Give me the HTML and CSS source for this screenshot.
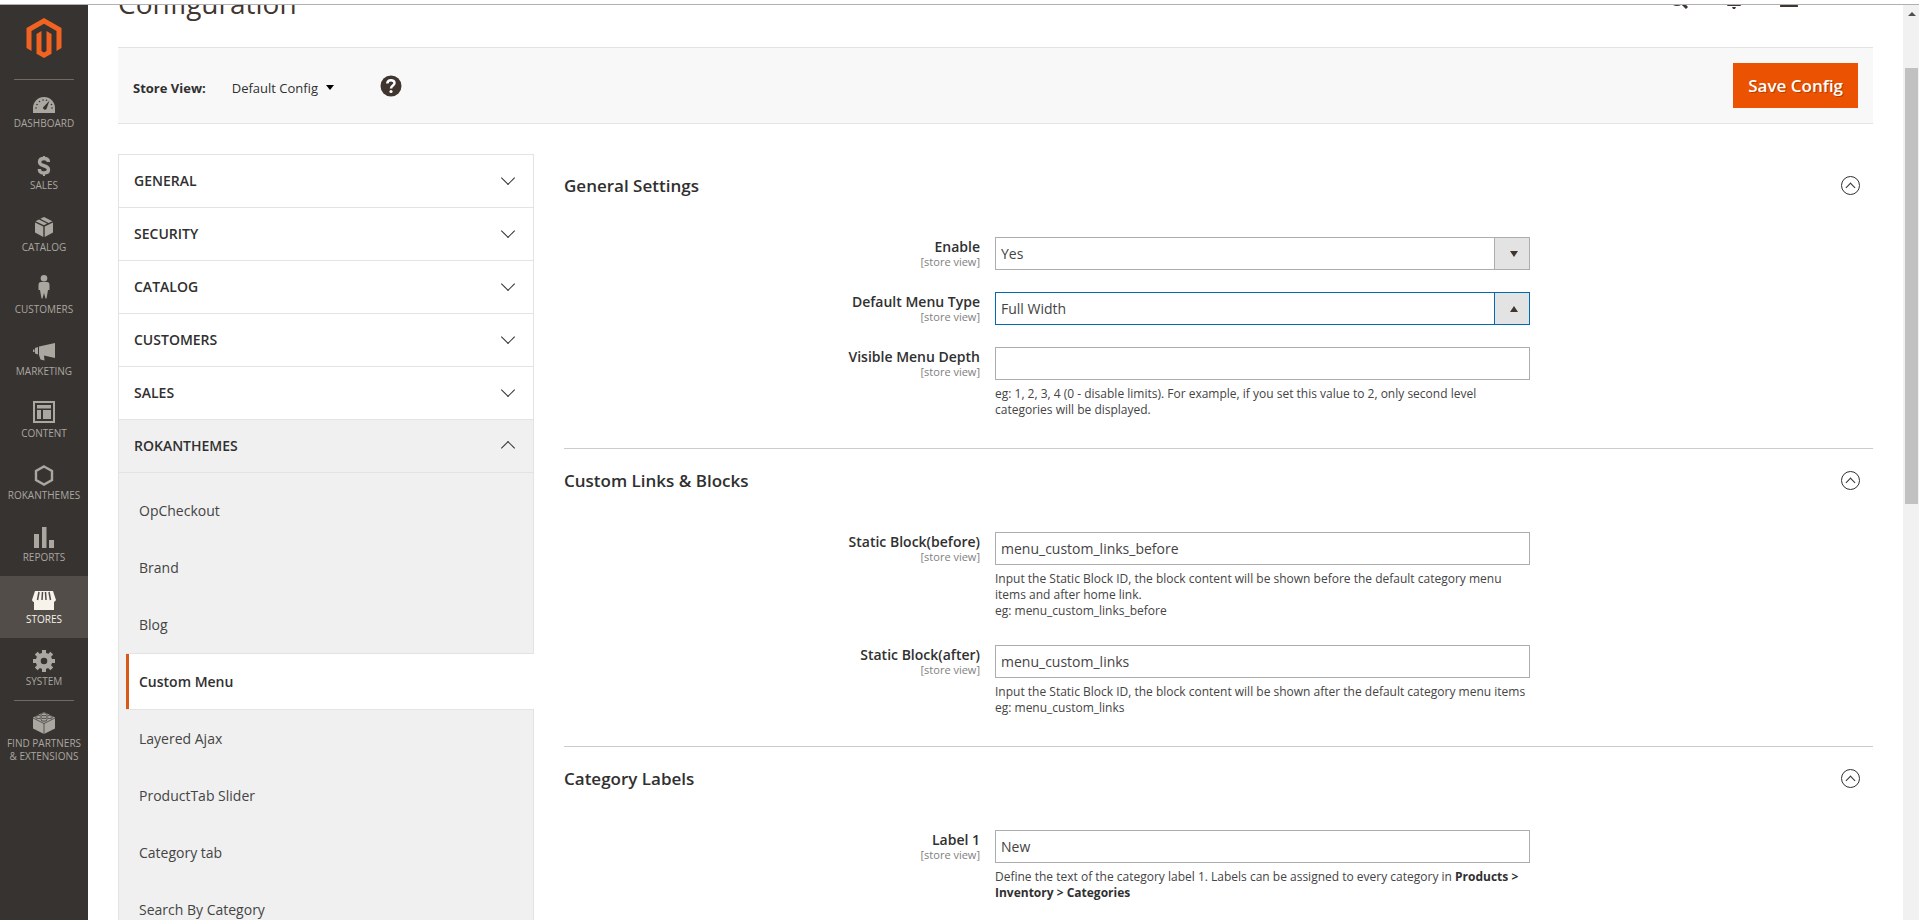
FILE: index.html
```
<!DOCTYPE html>
<html lang="en">
<head>
    <meta charset="UTF-8">
    <meta name="viewport" content="width=device-width, initial-scale=1.0">
    <title>Configuration</title>
    <link rel="stylesheet" href="styles.css">
</head>
<body>
    <div class="top-strip"></div>
    <div class="page">
        <nav class="menu">
            <a href="#" class="logo" aria-label="Home">
                <svg width="36" height="40" viewBox="0 0 36 40" fill="#f26322">
                    <path d="M18 0 L35.500 10 V30 L30.500 33 V13 L18 5.800 L5.500 13 V33 L.500 30 V10 Z"/>
                    <path d="M15.500 13 V33 L18 34.500 L20.500 33 V13 L25.500 15.900 V35.700 L18 40 L10.500 35.700 V15.900 Z"/>
                </svg>
            </a>
            <a href="#" class="menu-item">
                <svg viewBox="0 0 26 26"><path fill="currentColor" d="M2 24 V19 A11 11 0 0 1 24 19 V24 Z"/><g fill="#373330"><circle cx="5" cy="19" r=".8"/><circle cx="6" cy="15.500" r=".8"/><circle cx="8.500" cy="12.500" r=".8"/><circle cx="12" cy="11" r=".8"/><circle cx="15.500" cy="11.300" r=".8"/><circle cx="20.500" cy="15.500" r=".8"/><circle cx="21" cy="19" r=".8"/><path d="M18.500 11.500 L15.500 20 A2 2 0 0 1 12 18.500 Z"/></g></svg>
                <span>DASHBOARD</span>
            </a>
            <a href="#" class="menu-item">
                <svg viewBox="0 0 26 26"><path fill="none" stroke="currentColor" stroke-width="3.400" d="M17.500 11 C17.500 8.300 15.500 7.500 13 7.500 C10.300 7.500 8.500 8.500 8.500 11 C8.500 16 17.500 13.500 17.500 18.500 C17.500 21 15.500 22 13 22 C10.300 22 8.300 21 8.300 18"/><path fill="none" stroke="currentColor" stroke-width="2" d="M13 5 V8 M13 21 V25"/></svg>
                <span>SALES</span>
            </a>
            <a href="#" class="menu-item">
                <svg viewBox="0 0 26 26" fill="currentColor"><path d="M4 9.500 L12.300 13.500 V24 L4 19.500 Z M22 9.500 L13.700 13.500 V24 L22 19.500 Z M4.500 8.300 L8 6.500 L16 10.500 L13 12.200 Z M9.300 5.800 L13 4 L21.500 8.300 L17.500 9.900 Z"/></svg>
                <span>CATALOG</span>
            </a>
            <a href="#" class="menu-item">
                <svg viewBox="0 0 26 26" fill="currentColor"><circle cx="13" cy="3.300" r="3.300"/><path d="M10 7 H16 Q18.500 7 18.500 10 V15 H17 L16.500 18 L15.500 23.500 H14.500 L13 18 L11.500 23.500 H10.500 L9.500 18 L9 15 H7.500 V10 Q7.500 7 10 7 Z"/></svg>
                <span>CUSTOMERS</span>
            </a>
            <a href="#" class="menu-item">
                <svg viewBox="0 0 26 26" fill="currentColor"><path d="M8 9.500 L24 6 V21 L13 18.500 L13.500 23.500 L9.500 22.500 L8 18 Z M4 11 L7 10 V17.500 L4 16.500 Z M2 12.500 H3.500 V15 H2 Z"/></svg>
                <span>MARKETING</span>
            </a>
            <a href="#" class="menu-item">
                <svg viewBox="0 0 26 26" fill="currentColor"><path fill-rule="evenodd" d="M2 2 H24 V24 H2 Z M4 4 V22 H22 V4 Z"/><path d="M6 6 H20 V9.500 H6 Z M6 11 H10 V20 H6 Z M12 11 H20 V20 H12 Z"/></svg>
                <span>CONTENT</span>
            </a>
            <a href="#" class="menu-item">
                <svg viewBox="0 0 26 26"><path fill="none" stroke="currentColor" stroke-width="2.400" d="M13 5.500 L21 10 V19 L13 23.500 L5 19 V10 Z"/></svg>
                <span>ROKANTHEMES</span>
            </a>
            <a href="#" class="menu-item">
                <svg viewBox="0 0 26 26" fill="currentColor"><path d="M3 11 H8 V25 H3 Z M11 4 H15.500 V25 H11 Z M18 17 H23 V25 H18 Z"/></svg>
                <span>REPORTS</span>
            </a>
            <a href="#" class="menu-item active">
                <svg viewBox="0 0 26 26" fill="currentColor"><path d="M4 6 H22 L25 15 Q24 17 22.500 17 H23 V25 H3 V17 Q1.500 17 1 15 Z"/><path stroke="#524d49" stroke-width="1.500" d="M8 7 L6.500 15 M11.500 7 L11 15 M14.500 7 L15 15 M18 7 L19.500 15"/></svg>
                <span>STORES</span>
            </a>
            <a href="#" class="menu-item">
                <svg viewBox="0 0 26 26"><circle cx="13" cy="14" r="5.800" fill="none" stroke="currentColor" stroke-width="5"/><path stroke="currentColor" stroke-width="4" d="M13 3 V7 M13 21 V25 M2 14 H6 M20 14 H24 M5.200 6.200 L8 9 M18 19 L20.800 21.800 M5.200 21.800 L8 19 M18 9 L20.800 6.200"/></svg>
                <span>SYSTEM</span>
            </a>
            <a href="#" class="menu-item partners">
                <svg viewBox="0 0 26 26"><path fill="currentColor" d="M2 8.500 L13 3 L24 8.500 V19.500 L13 25 L2 19.500 Z"/><path fill="none" stroke="#373330" stroke-width=".7" d="M2 9 L13 14.500 L24 9 M13 14.500 V25"/><g fill="currentColor" stroke="#373330" stroke-width=".8"><ellipse cx="13" cy="5.300" rx="3" ry="1.500"/><ellipse cx="7.500" cy="8" rx="3" ry="1.500"/><ellipse cx="18.500" cy="8" rx="3" ry="1.500"/><ellipse cx="13" cy="10.700" rx="3" ry="1.500"/></g></svg>
                <span>FIND PARTNERS<br>&amp; EXTENSIONS</span>
            </a>
        </nav>

        <main class="main">
            <header class="page-header">
                <h1>Configuration</h1>
                <div class="header-tools">
                    <svg width="20" height="20" viewBox="0 0 20 20" fill="none" stroke="#41362f"><circle cx="8" cy="9" r="7" stroke-width="2"/><path stroke-width="3" d="M12.500 13.500 L18 19"/></svg>
                    <svg width="20" height="20" viewBox="0 0 20 20" fill="#41362f"><path d="M4 15 C5 8 5 2 10 2 C15 2 15 8 16 15 L17 17 H3 Z M8 18 H12 L11 20 H9 Z"/></svg>
                    <svg width="20" height="20" viewBox="0 0 20 20" fill="#41362f"><circle cx="10" cy="5" r="5"/><path d="M1 18 Q1 11 10 11 Q19 11 19 18 Z"/></svg>
                </div>
            </header>

            <div class="toolbar">
                <strong>Store View:</strong>
                <button type="button" class="store-switch">Default Config</button>
                <a href="#" class="help" aria-label="Help">
                    <svg width="22" height="22" viewBox="0 0 22 22"><circle cx="11" cy="11" r="10.500" fill="#41362f"/><path fill="none" stroke="#fff" stroke-width="2.500" d="M7.300 8.500 C7.500 4 14.500 4.300 14.500 8 C14.500 10.500 11 10.500 11 13.500"/><circle cx="11" cy="16.500" r="1.600" fill="#fff"/></svg>
                </a>
                <button type="button" class="save">Save Config</button>
            </div>

            <div class="columns">
                <nav class="config-nav">
                    <a href="#" class="tab">GENERAL</a>
                    <a href="#" class="tab">SECURITY</a>
                    <a href="#" class="tab">CATALOG</a>
                    <a href="#" class="tab">CUSTOMERS</a>
                    <a href="#" class="tab">SALES</a>
                    <a href="#" class="tab open">ROKANTHEMES</a>
                    <ul class="subnav">
                        <li><a href="#">OpCheckout</a></li>
                        <li><a href="#">Brand</a></li>
                        <li><a href="#">Blog</a></li>
                        <li class="current"><a href="#">Custom Menu</a></li>
                        <li><a href="#">Layered Ajax</a></li>
                        <li><a href="#">ProductTab Slider</a></li>
                        <li><a href="#">Category tab</a></li>
                        <li><a href="#">Search By Category</a></li>
                    </ul>
                </nav>

                <form class="settings">
                    <section class="section">
                        <h2>General Settings <button type="button" class="toggle" aria-label="Collapse"></button></h2>
                        <div class="field">
                            <label for="enable">Enable <small>[store view]</small></label>
                            <div class="select">
                                <select id="enable"><option>Yes</option><option>No</option></select>
                            </div>
                        </div>
                        <div class="field">
                            <label for="menu_type">Default Menu Type <small>[store view]</small></label>
                            <div class="select focused">
                                <select id="menu_type"><option>Full Width</option></select>
                            </div>
                        </div>
                        <div class="field">
                            <label for="depth">Visible Menu Depth <small>[store view]</small></label>
                            <div>
                                <input type="text" id="depth">
                                <p class="note">eg: 1, 2, 3, 4 (0 - disable limits). For example, if you set this value to 2, only second level categories will be displayed.</p>
                            </div>
                        </div>
                    </section>

                    <section class="section">
                        <h2>Custom Links &amp; Blocks <button type="button" class="toggle" aria-label="Collapse"></button></h2>
                        <div class="field">
                            <label for="before">Static Block(before) <small>[store view]</small></label>
                            <div>
                                <input type="text" id="before" value="menu_custom_links_before">
                                <p class="note">Input the Static Block ID, the block content will be shown before the default category menu items and after home link.<br>eg: menu_custom_links_before</p>
                            </div>
                        </div>
                        <div class="field">
                            <label for="after">Static Block(after) <small>[store view]</small></label>
                            <div>
                                <input type="text" id="after" value="menu_custom_links">
                                <p class="note">Input the Static Block ID, the block content will be shown after the default category menu items<br>eg: menu_custom_links</p>
                            </div>
                        </div>
                    </section>

                    <section class="section">
                        <h2>Category Labels <button type="button" class="toggle" aria-label="Collapse"></button></h2>
                        <div class="field">
                            <label for="label1">Label 1 <small>[store view]</small></label>
                            <div>
                                <input type="text" id="label1" value="New">
                                <p class="note">Define the text of the category label 1. Labels can be assigned to every category in <b>Products &gt; Inventory &gt; Categories</b></p>
                            </div>
                        </div>
                    </section>
                </form>
            </div>
        </main>

        <div class="scrollbar">
            <div class="scroll-up"></div>
            <div class="scroll-thumb"></div>
        </div>
    </div>
</body>
</html>
```
FILE: styles.css
```
* {
    box-sizing: border-box;
}
body {
    display: flex;
    flex-direction: column;
    height: 100vh;
    margin: 0;
    overflow: hidden;
    background: #fff;
    color: #303030;
    font-family: "Open Sans", sans-serif;
    font-size: 14px;
}
a {
    color: inherit;
    text-decoration: none;
}
button, input, select {
    font-family: inherit;
    color: inherit;
}
.top-strip {
    flex: none;
    height: 5px;
    border-bottom: 1px solid #b0b0b0;
}
.page {
    display: flex;
    flex: 1;
    min-height: 0;
}

/* left admin menu */
.menu {
    flex: none;
    width: 88px;
    background: #373330;
    overflow: hidden;
}
.logo {
    display: block;
    height: 75px;
    margin: 0 14px;
    padding-top: 13px;
    text-align: center;
    border-bottom: 1px solid #736963;
}
.menu-item {
    display: flex;
    flex-direction: column;
    align-items: center;
    height: 62px;
    padding-top: 9px;
    color: #aaa6a0;
    font-size: 10px;
    line-height: 13px;
    text-align: center;
    white-space: nowrap;
}
.menu-item svg {
    flex: none;
    width: 26px;
    height: 26px;
    margin-bottom: 2px;
}
.menu-item.active {
    background: #524d49;
    color: #f7f3eb;
}
.menu-item.partners {
    margin: 0 14px;
    padding-top: 8px;
    border-top: 1px solid #736963;
}

/* page header and toolbar */
.main {
    flex: 1;
    min-width: 0;
    padding: 0 30px;
    overflow: hidden;
}
.page-header {
    display: flex;
    justify-content: space-between;
    height: 42px;
    overflow: hidden;
}
.page-header h1 {
    margin: -20px 0 0;
    color: #41362f;
    font-size: 28px;
    font-weight: 400;
    line-height: 36px;
}
.header-tools {
    display: flex;
    gap: 35px;
    margin: -16px 74px 0 0;
}
.toolbar {
    display: flex;
    align-items: center;
    padding: 15px;
    background: #f8f8f8;
    border-top: 1px solid #e3e3e3;
    border-bottom: 1px solid #e3e3e3;
}
.toolbar strong, .store-switch {
    padding: 4px 0 0;
    font-size: 13px;
}
.store-switch {
    display: flex;
    align-items: center;
    gap: 8px;
    margin-left: 26px;
    background: none;
    border: none;
}
.store-switch::after {
    content: "";
    border: 4px solid transparent;
    border-top: 5px solid #000;
    border-bottom: none;
}
.help {
    height: 22px;
    margin-left: 46px;
}
.save {
    height: 45px;
    margin-left: auto;
    padding: 0 15px 1px;
    background: #eb5202;
    border: none;
    color: #fff;
    font-size: 17px;
    font-weight: 600;
    text-shadow: 1px 1px 0 rgba(0, 0, 0, 0.25);
}

.columns {
    display: flex;
    gap: 30px;
    margin-top: 30px;
}

/* config tabs */
.config-nav {
    flex: none;
    align-self: flex-start;
    width: 416px;
    border: 1px solid #e3e3e3;
}
.tab {
    display: flex;
    align-items: center;
    justify-content: space-between;
    height: 53px;
    padding: 0 20px 2px 15px;
    border-bottom: 1px solid #e3e3e3;
    font-weight: 600;
}
.tab::after {
    content: "";
    width: 9px;
    height: 9px;
    margin-bottom: 4px;
    border: solid #303030;
    border-width: 0 1px 1px 0;
    transform: rotate(45deg);
}
.tab.open {
    background: #f0f0f0;
}
.tab.open::after {
    margin-bottom: -6px;
    transform: rotate(225deg);
}
.subnav {
    margin: 0;
    padding: 9px 0 10px 7px;
    background: #f0f0f0;
    list-style: none;
}
.subnav a {
    display: block;
    padding: 0 13px;
    color: #444;
    line-height: 57px;
}
.subnav .current {
    margin-right: -1px;
    background: #fff;
    border: solid #e3e3e3;
    border-width: 1px 0;
}
.subnav .current a {
    padding-left: 10px;
    border-left: 3px solid #d95717;
    color: #303030;
    font-weight: 600;
    line-height: 55px;
}

/* settings form */
.settings {
    flex: 1;
    min-width: 0;
}
.section {
    padding-bottom: 26px;
}
.section + .section {
    border-top: 1px solid #ccc;
}
.section h2 {
    display: flex;
    align-items: center;
    justify-content: space-between;
    height: 63px;
    margin: 0 0 20px;
    padding-right: 13px;
    font-size: 17px;
    font-weight: 600;
}
.toggle {
    display: grid;
    place-items: center;
    width: 19px;
    height: 19px;
    padding: 0;
    background: none;
    border: 1px solid #303030;
    border-radius: 50%;
}
.toggle::before {
    content: "";
    width: 6px;
    height: 6px;
    margin-top: 4px;
    border: solid #303030;
    border-width: 1px 0 0 1px;
    transform: rotate(45deg);
}
.field {
    display: grid;
    grid-template-columns: 431fr 535fr 343fr;
    margin-bottom: 22px;
}
.field:last-child {
    margin-bottom: 0;
}
.field label {
    padding: 1px 15px 0 0;
    font-weight: 600;
    line-height: 18px;
    text-align: right;
}
.field small {
    display: block;
    color: #808080;
    font-size: 11px;
    font-weight: 400;
    line-height: 12px;
}
.field input, .field select {
    display: block;
    width: 100%;
    height: 33px;
    padding: 0 5px;
    background: #fff;
    border: 1px solid #adadad;
    border-radius: 0;
    color: #444;
    font-size: 14px;
    appearance: none;
}
.select {
    position: relative;
    height: 33px;
}
.select::before {
    content: "";
    position: absolute;
    top: 1px;
    right: 1px;
    width: 34px;
    height: 31px;
    background: #e3e3e3;
    border-left: 1px solid #adadad;
    pointer-events: none;
}
.select::after {
    content: "";
    position: absolute;
    top: 14px;
    right: 12px;
    border: 4px solid transparent;
    border-top: 6px solid #41362f;
    border-bottom: none;
    pointer-events: none;
}
.select.focused select, .select.focused::before {
    border-color: #006bb4;
}
.select.focused::after {
    border-top: none;
    border-bottom: 6px solid #41362f;
}
.note {
    margin: 6px 0 4px;
    color: #444;
    font-size: 12px;
    line-height: 16px;
}
.note b {
    color: #303030;
}

/* window scrollbar */
.scrollbar {
    flex: none;
    width: 16px;
    padding: 7px 1px 0 2px;
    background: #f1f1f1;
}
.scroll-up {
    width: 8px;
    margin: 0 auto 52px;
    border: 4px solid transparent;
    border-top: none;
    border-bottom: 4px solid #505050;
}
.scroll-thumb {
    height: 48%;
    background: #c1c1c1;
}
```
